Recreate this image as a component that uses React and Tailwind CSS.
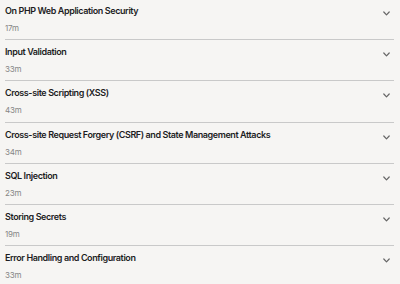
import React from "react";

const items = [
  ["On PHP Web Application Security", "17m"],
  ["Input Validation", "33m"],
  ["Cross-site Scripting (XSS)", "43m"],
  ["Cross-site Request Forgery (CSRF) and State Management Attacks", "34m"],
  ["SQL Injection", "23m"],
  ["Storing Secrets", "19m"],
  ["Error Handling and Configuration", "33m"],
];

function Chevron() {
  return (
    <svg width="7" height="5" viewBox="0 0 7 5" className="block">
      <path d="M0.8 1 L3.5 3.8 L6.2 1" fill="none" stroke="#666" strokeWidth="1.2" strokeLinecap="round" strokeLinejoin="round" />
    </svg>
  );
}

export default function App() {
  return (
    <div className="w-[400px] h-[284px] overflow-hidden bg-[#f6f5f3]" style={{ fontFamily: "Inter, 'Noto Sans', sans-serif" }}>
      <div className="mt-[-1px] pl-[5px] pr-[6px]">
        {items.map(([t, d], i) => (
          <div key={i} className="flex border-b border-[#c9c9c9] h-[41.2px]">
            <div className="flex-1 pt-[5px]">
              <div className="text-[9px] leading-[14px] font-semibold text-[#1d1d1f] tracking-[-0.4px]">{t}</div>
              <div className="mt-[4px] text-[8px] leading-[12px] text-[#858585] tracking-[-0.2px]">{d}</div>
            </div>
            <div className="pt-[12px] pr-[4px]">
              <Chevron />
            </div>
          </div>
        ))}
      </div>
    </div>
  );
}
